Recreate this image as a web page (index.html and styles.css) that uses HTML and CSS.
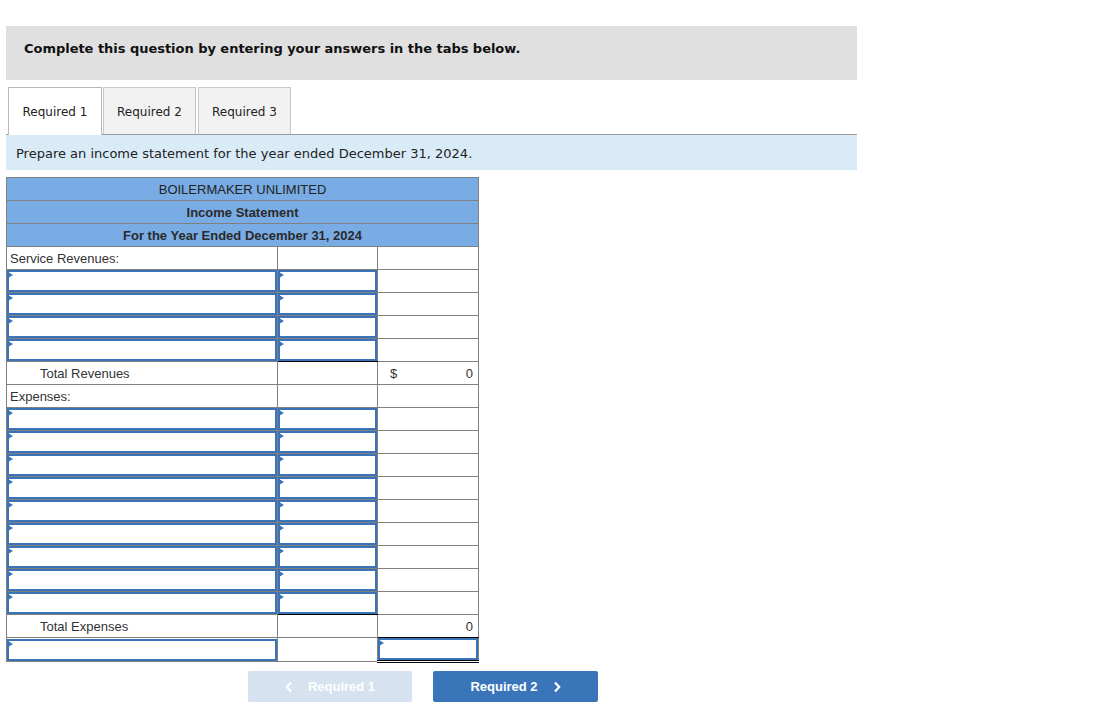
FILE: index.html
```html
<!DOCTYPE html>
<html>
<head>
<meta charset="utf-8">
<link rel="stylesheet" href="styles.css">
</head>
<body>
<div class="page">
  <div class="prompt">Complete this question by entering your answers in the tabs below.</div>
  <div class="tabs">
    <div class="tab active">Required 1</div>
    <div class="tab">Required 2</div>
    <div class="tab">Required 3</div>
  </div>
  <div class="instr">Prepare an income statement for the year ended December 31, 2024.</div>

  <table class="stmt">
    <colgroup><col class="c1"><col class="c2"><col class="c3"></colgroup>
    <tr class="hd"><td colspan="3">BOILERMAKER UNLIMITED</td></tr>
    <tr class="hd b"><td colspan="3">Income Statement</td></tr>
    <tr class="hd b"><td colspan="3">For the Year Ended December 31, 2024</td></tr>
    <tr><td class="lbl">Service Revenues:</td><td></td><td></td></tr>
    <tr><td class="in"><div class="box"></div></td><td class="in"><div class="box"></div></td><td></td></tr>
    <tr><td class="in"><div class="box"></div></td><td class="in"><div class="box"></div></td><td></td></tr>
    <tr><td class="in"><div class="box"></div></td><td class="in"><div class="box"></div></td><td></td></tr>
    <tr><td class="in"><div class="box"></div></td><td class="in ul"><div class="box"></div></td><td></td></tr>
    <tr><td class="lbl ind">Total Revenues</td><td></td><td class="num"><span class="dollar">$</span>0</td></tr>
    <tr><td class="lbl">Expenses:</td><td></td><td></td></tr>
    <tr><td class="in"><div class="box"></div></td><td class="in"><div class="box"></div></td><td></td></tr>
    <tr><td class="in"><div class="box"></div></td><td class="in"><div class="box"></div></td><td></td></tr>
    <tr><td class="in"><div class="box"></div></td><td class="in"><div class="box"></div></td><td></td></tr>
    <tr><td class="in"><div class="box"></div></td><td class="in"><div class="box"></div></td><td></td></tr>
    <tr><td class="in"><div class="box"></div></td><td class="in"><div class="box"></div></td><td></td></tr>
    <tr><td class="in"><div class="box"></div></td><td class="in"><div class="box"></div></td><td></td></tr>
    <tr><td class="in"><div class="box"></div></td><td class="in"><div class="box"></div></td><td></td></tr>
    <tr><td class="in"><div class="box"></div></td><td class="in"><div class="box"></div></td><td></td></tr>
    <tr><td class="in"><div class="box"></div></td><td class="in ul"><div class="box"></div></td><td></td></tr>
    <tr><td class="lbl ind">Total Expenses</td><td></td><td class="num ul">0</td></tr>
    <tr><td class="in"><div class="box"></div></td><td></td><td class="in dbl"><div class="box"></div></td></tr>
  </table>

  <div class="nav">
    <button class="btn disabled"><svg class="chev" width="8" height="12" viewBox="0 0 8 12"><polyline points="6,1.5 1.8,6 6,10.5" fill="none" stroke="currentColor" stroke-width="2.2"/></svg>Required 1</button>
    <button class="btn primary">Required 2<svg class="chev after" width="8" height="12" viewBox="0 0 8 12"><polyline points="2,1.5 6.2,6 2,10.5" fill="none" stroke="currentColor" stroke-width="2.2"/></svg></button>
  </div>
</div>
</body>
</html>
```
FILE: styles.css
```css
html, body {
  margin: 0;
  padding: 0;
  background: #fff;
}
.page {
  padding: 26px 0 0 6px;
  width: 851px;
  font-family: "DejaVu Sans", Verdana, sans-serif;
  color: #222;
}
.prompt {
  height: 54px;
  box-sizing: border-box;
  background: #e0e0e0;
  padding: 15px 0 0 18px;
  font-size: 13px;
  line-height: 16px;
  font-weight: bold;
  color: #111;
  letter-spacing: -0.03px;
}
.tabs {
  margin-top: 7px;
  display: flex;
  padding-left: 2px;
  border-bottom: 1px solid #9a9a9a;
  height: 47px;
}
.tab {
  width: 93px;
  height: 47px;
  box-sizing: border-box;
  border: 1px solid #c8c8c8;
  border-bottom: none;
  background: #f2f2f2;
  padding-top: 1px;
  display: flex;
  align-items: center;
  justify-content: center;
  font-size: 12px;
  color: #222;
}
.tab.active {
  width: 94px;
  background: #fff;
  border-color: #b8b8b8;
  height: 48px;
  margin-bottom: -1px;
  padding-bottom: 1px;
}
.tab + .tab { margin-left: 1px; }
.tab + .tab + .tab { margin-left: 2px; }
.instr {
  height: 35px;
  box-sizing: border-box;
  background: #daebf8;
  padding: 11px 0 0 10px;
  font-size: 13px;
  line-height: 16px;
  color: #222;
}
.stmt {
  margin-top: 7px;
  border-collapse: collapse;
  font-family: "Liberation Sans", Arial, sans-serif;
  font-size: 13px;
  color: #333;
  table-layout: fixed;
  width: 473px;
}
.c1 { width: 271px; }
.c2 { width: 100px; }
.c3 { width: 101px; }
.stmt td {
  border: 1px solid #808080;
  height: 22px;
  padding: 0;
  vertical-align: middle;
  line-height: 15px;
}
.stmt tr.hd td {
  background: #79ace4;
  text-align: center;
  color: #222;
}
.stmt tr.hd.b td { font-weight: bold; color: #2a2a2a; }
.stmt td.lbl { padding-left: 3px; }
.stmt td.lbl.ind { padding-left: 33px; }
.stmt td.num { text-align: right; padding-right: 5px; }
.dollar { float: left; margin-left: 12px; }
.stmt td.ul { border-bottom: 1px solid #000; }
.stmt td.dbl { border-bottom: 3px double #000; }
.box {
  position: relative;
  height: 22px;
  box-sizing: border-box;
  border: 2px solid #3b73b9;
  background: #fff;
}
.box::before {
  content: "";
  position: absolute;
  left: -1px;
  top: 0;
  width: 0;
  height: 0;
  border-left: 5px solid #3b73b9;
  border-top: 3px solid transparent;
  border-bottom: 3px solid transparent;
}
.nav {
  margin-top: 8px;
  margin-left: 242px;
  display: flex;
  gap: 21px;
}
.btn {
  height: 31px;
  border: none;
  border-radius: 2px;
  font-family: "Liberation Sans", Arial, sans-serif;
  font-size: 13px;
  font-weight: bold;
  color: #fff;
  display: flex;
  align-items: center;
  justify-content: center;
  padding: 0;
}
.btn.disabled { width: 164px; background: #d6e2f0; }
.btn.primary { width: 165px; background: #3a75b9; }
.chev { display: block; }
.btn.disabled .chev { margin-right: 15px; }
.chev.after { margin-left: 15px; }
```
